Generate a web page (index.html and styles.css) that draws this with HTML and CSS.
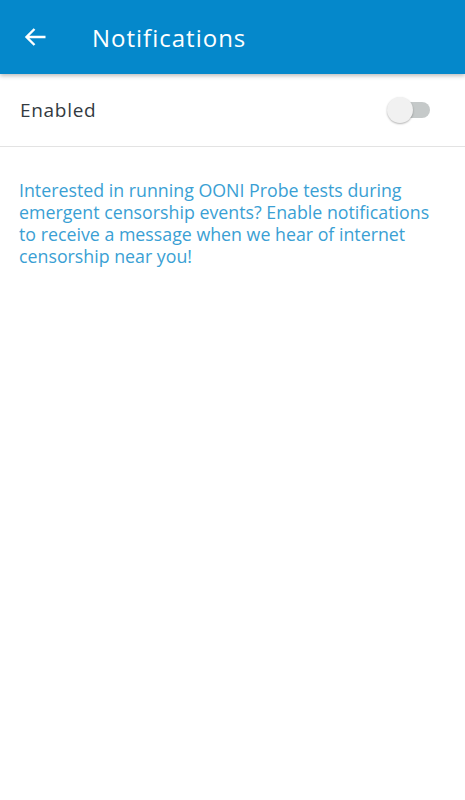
FILE: index.html
```html
<!DOCTYPE html>
<html>
<head>
<meta charset="utf-8">
<link rel="stylesheet" href="styles.css">
</head>
<body>
<header class="appbar">
  <svg class="back" width="22" height="20" viewBox="0 0 22 20"><path d="M21.5 10H2.5M10.5 2L2.5 10L10.5 18" fill="none" stroke="#fff" stroke-width="2.4"/></svg>
  <h1 class="title">Notifications</h1>
</header>
<div class="row">
  <span class="label">Enabled</span>
  <div class="switch"><div class="track"></div><div class="thumb"></div></div>
</div>
<p class="info">Interested in running OONI Probe tests during emergent censorship events? Enable notifications to receive a message when we hear of internet censorship near you!</p>
</body>
</html>
```
FILE: styles.css
```css
html, body { margin: 0; padding: 0; background: #fff; }
body { font-family: "Open Sans", "Noto Sans", sans-serif; width: 465px; height: 800px; overflow: hidden; }
.appbar {
  height: 74px; background: #0588cb; display: flex; align-items: center;
  box-shadow: 0 2px 4px rgba(0,0,0,0.25); position: relative; z-index: 1;
}
.back { margin-left: 24px; width: 22px; height: 20px; }
.title { margin: 0 0 0 46px; color: #fff; font-weight: 400; font-size: 24px; letter-spacing: 1px; }
.row {
  height: 72px; display: flex; align-items: center; justify-content: space-between;
  padding: 0 35px 0 20px; border-bottom: 1px solid #e3e3e3;
}
.label { font-size: 19px; color: #333a3f; letter-spacing: 0.7px; }
.switch { position: relative; width: 43px; height: 26px; }
.track { position: absolute; left: 8px; top: 5px; width: 35px; height: 16px; border-radius: 8px; background: #c5c9c9; }
.thumb { position: absolute; left: 0; top: 0; width: 26px; height: 26px; border-radius: 50%; background: #f1f1f1; box-shadow: 0 1px 2px rgba(0,0,0,0.3); }
.info { margin: 32px 30px 0 19px; font-size: 17.8px; line-height: 22px; color: #3a9fd4; }
```
